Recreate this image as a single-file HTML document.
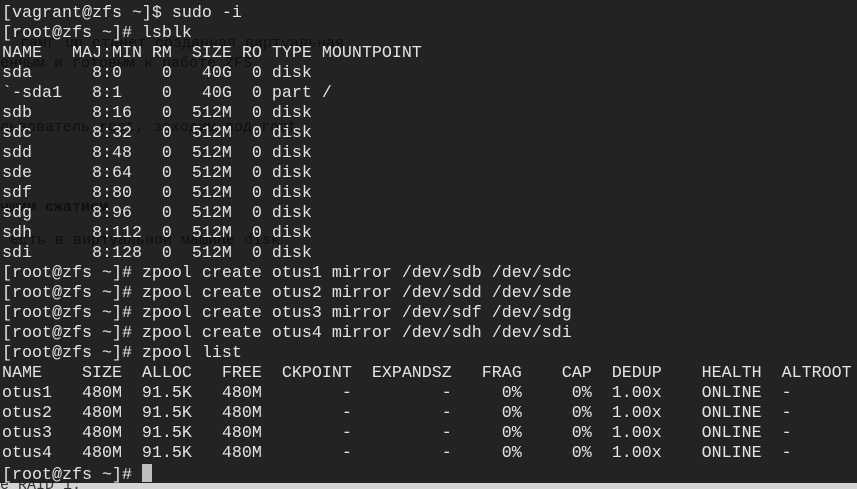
<!DOCTYPE html>
<html><head><meta charset="utf-8"><style>
html,body{margin:0;padding:0}
body{width:857px;height:489px;overflow:hidden;background:#232323;position:relative}
pre{margin:0;position:absolute;left:2px;top:4px;font-family:"Liberation Mono","DejaVu Sans Mono",monospace;font-size:16.67px;line-height:20px;color:#e4e4e4;white-space:pre}
.g{position:absolute;font-family:"Liberation Mono","DejaVu Sans Mono",monospace;font-size:15px;color:#000;white-space:pre;opacity:.55}
.cur{display:inline-block;width:10px;height:18px;background:#bdbdbd;vertical-align:-3px}
.bot{position:absolute;left:0;top:483px;width:857px;height:6px;background:#d4d4d4;overflow:hidden}
.bot span{position:absolute;left:0;top:-6px;font-family:"Liberation Mono",monospace;font-size:15px;color:#333}
</style></head><body>
<div class="g" style="left:20px;top:35px">ганг up станет созданная виртуальная</div>
<div class="g" style="left:0;top:55px">енным и готовым к работе ZFS.</div>
<div class="g" style="left:0;top:119px">льзователь root, заходим под root</div>
<div class="g" style="left:0;top:199px;font-weight:bold">чшим сжатием</div>
<div class="g" style="left:10px;top:232px">есть в виртуальной машине disk</div>
<pre>[vagrant@zfs ~]$ sudo -i
[root@zfs ~]# lsblk
NAME   MAJ:MIN RM  SIZE RO TYPE MOUNTPOINT
sda      8:0    0   40G  0 disk
`-sda1   8:1    0   40G  0 part /
sdb      8:16   0  512M  0 disk
sdc      8:32   0  512M  0 disk
sdd      8:48   0  512M  0 disk
sde      8:64   0  512M  0 disk
sdf      8:80   0  512M  0 disk
sdg      8:96   0  512M  0 disk
sdh      8:112  0  512M  0 disk
sdi      8:128  0  512M  0 disk
[root@zfs ~]# zpool create otus1 mirror /dev/sdb /dev/sdc
[root@zfs ~]# zpool create otus2 mirror /dev/sdd /dev/sde
[root@zfs ~]# zpool create otus3 mirror /dev/sdf /dev/sdg
[root@zfs ~]# zpool create otus4 mirror /dev/sdh /dev/sdi
[root@zfs ~]# zpool list
NAME    SIZE  ALLOC   FREE  CKPOINT  EXPANDSZ   FRAG    CAP  DEDUP    HEALTH  ALTROOT
otus1   480M  91.5K   480M        -         -     0%     0%  1.00x    ONLINE  -
otus2   480M  91.5K   480M        -         -     0%     0%  1.00x    ONLINE  -
otus3   480M  91.5K   480M        -         -     0%     0%  1.00x    ONLINE  -
otus4   480M  91.5K   480M        -         -     0%     0%  1.00x    ONLINE  -
[root@zfs ~]# <span class="cur"></span></pre>
<div class="bot"><span>e RAID 1:</span></div>
</body></html>
